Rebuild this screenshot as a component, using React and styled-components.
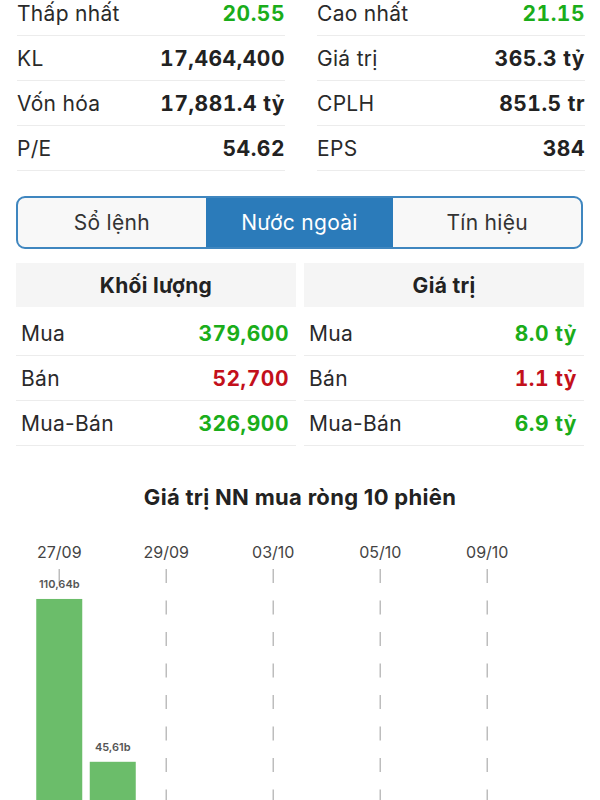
import styled, { createGlobalStyle } from "styled-components";

const GlobalStyle = createGlobalStyle`
  body {
    margin: 0;
    background: #fff;
    font-family: Inter, "Noto Sans", sans-serif;
    color: #222;
    overflow: hidden;
  }
`;

const Page = styled.div`
  width: 600px;
`;

const StatsGrid = styled.div`
  display: grid;
  grid-template-columns: 1fr 1fr;
  column-gap: 32px;
  padding: 0 15px 0 17px;
  margin-top: -9px;
`;

const StatRow = styled.div`
  height: 45px;
  display: flex;
  align-items: center;
  justify-content: space-between;
  border-bottom: 1px solid #ececec;
  box-sizing: border-box;
  font-size: 21px;
`;

const Label = styled.span`
  color: #2a2a2a;
  letter-spacing: 0.3px;
`;

const Value = styled.span`
  font-weight: 700;
  letter-spacing: 0.5px;
  font-variant-numeric: tabular-nums;
  color: ${(p) => p.$color || "#222"};
`;

const Tabs = styled.div`
  margin: 25px 17px 0 16px;
  height: 53px;
  box-sizing: border-box;
  border: 2px solid #3f86bf;
  border-radius: 9px;
  overflow: hidden;
  display: grid;
  grid-template-columns: 1fr 1fr 1fr;
  background: #f8f8f8;
`;

const Tab = styled.div`
  display: flex;
  align-items: center;
  justify-content: center;
  font-size: 21px;
  letter-spacing: 0.3px;
  color: ${(p) => (p.$active ? "#fff" : "#333")};
  background: ${(p) => (p.$active ? "#2b7bba" : "transparent")};
`;

const Foreign = styled.div`
  margin: 14px 16px 0;
  display: grid;
  grid-template-columns: 1fr 1fr;
  column-gap: 8px;
`;

const Panel = styled.div`
  display: flex;
  flex-direction: column;
`;

const PanelHead = styled.div`
  height: 44px;
  display: flex;
  align-items: center;
  justify-content: center;
  background: #f5f5f5;
  font-size: 21px;
  letter-spacing: 0.3px;
  font-weight: 700;
  color: #222;
  margin-bottom: 4px;
`;

const PanelRow = styled(StatRow)`
  padding: 0 7px 0 5px;
`;

const ChartTitle = styled.h2`
  margin: 38px 0 0;
  text-align: center;
  font-size: 22px;
  line-height: 26px;
  letter-spacing: 0.3px;
  font-weight: 700;
  color: #222;
`;

const ChartBox = styled.div`
  margin-top: 19px;
  height: 360px;
`;

const GREEN = "#1aad1a";
const RED = "#c3101b";

const stats = [
  ["Thấp nhất", "20.55", GREEN, "Cao nhất", "21.15", GREEN],
  ["KL", "17,464,400", null, "Giá trị", "365.3 tỷ", null],
  ["Vốn hóa", "17,881.4 tỷ", null, "CPLH", "851.5 tr", null],
  ["P/E", "54.62", null, "EPS", "384", null],
];

const volume = [
  ["Mua", "379,600", GREEN],
  ["Bán", "52,700", RED],
  ["Mua-Bán", "326,900", GREEN],
];

const amount = [
  ["Mua", "8.0 tỷ", GREEN],
  ["Bán", "1.1 tỷ", RED],
  ["Mua-Bán", "6.9 tỷ", GREEN],
];

const sessions = [
  { d: "27/09", v: 110.64 },
  { d: "28/09", v: 45.61 },
  { d: "29/09", v: 12.4 },
  { d: "02/10", v: -8.2 },
  { d: "03/10", v: 6.3 },
  { d: "04/10", v: -14.7 },
  { d: "05/10", v: 9.8 },
  { d: "06/10", v: 3.5 },
  { d: "09/10", v: -4.1 },
  { d: "10/10", v: 11.2 },
];

function NetChart() {
  const slot = 53.5;
  const x0 = 32.5;
  const base = 347;
  const scale = 2.504;
  return (
    <svg width="600" height="360" viewBox="0 0 600 360">
      {sessions.map((s, i) => {
        const cx = x0 + slot * i + slot / 2;
        if (i % 2) return null;
        return (
          <g key={s.d}>
            <text
              x={cx}
              y={29}
              textAnchor="middle"
              fontSize="16"
              fill="#444"
              fontFamily="Inter, sans-serif"
            >
              {s.d}
            </text>
            <line
              x1={cx}
              x2={cx}
              y1={40}
              y2={base}
              stroke="#bdbdbd"
              strokeWidth="1.5"
              strokeDasharray="14 17.5"
            />
          </g>
        );
      })}
      {sessions.map((s, i) => {
        const cx = x0 + slot * i + slot / 2;
        const h = Math.abs(s.v) * scale;
        const top = s.v >= 0 ? base - h : base;
        return (
          <g key={"b" + s.d}>
            <rect
              x={cx - 23}
              y={top}
              width="46"
              height={h}
              fill={s.v >= 0 ? "#6bbd6a" : "#e06666"}
            />
            <text
              x={cx}
              y={s.v >= 0 ? top - 11 : top + h + 14}
              textAnchor="middle"
              fontSize="11"
              fontWeight="600"
              fill="#555"
              fontFamily="Inter, sans-serif"
            >
              {s.v.toFixed(2).replace(".", ",")}b
            </text>
          </g>
        );
      })}
    </svg>
  );
}

export default function App() {
  return (
    <Page>
      <GlobalStyle />
      <StatsGrid>
        {stats.map((r) => [
          <StatRow key={r[0]}>
            <Label>{r[0]}</Label>
            <Value $color={r[2]}>{r[1]}</Value>
          </StatRow>,
          <StatRow key={r[3]}>
            <Label>{r[3]}</Label>
            <Value $color={r[5]}>{r[4]}</Value>
          </StatRow>,
        ])}
      </StatsGrid>

      <Tabs>
        <Tab>Sổ lệnh</Tab>
        <Tab $active>Nước ngoài</Tab>
        <Tab>Tín hiệu</Tab>
      </Tabs>

      <Foreign>
        <Panel>
          <PanelHead>Khối lượng</PanelHead>
          {volume.map((r) => (
            <PanelRow key={r[0]}>
              <Label>{r[0]}</Label>
              <Value $color={r[2]}>{r[1]}</Value>
            </PanelRow>
          ))}
        </Panel>
        <Panel>
          <PanelHead>Giá trị</PanelHead>
          {amount.map((r) => (
            <PanelRow key={r[0]}>
              <Label>{r[0]}</Label>
              <Value $color={r[2]}>{r[1]}</Value>
            </PanelRow>
          ))}
        </Panel>
      </Foreign>

      <ChartTitle>Giá trị NN mua ròng 10 phiên</ChartTitle>
      <ChartBox>
        <NetChart />
      </ChartBox>
    </Page>
  );
}
